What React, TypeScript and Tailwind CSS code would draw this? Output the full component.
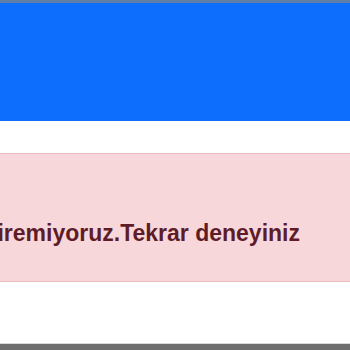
import React from 'react'

export default function App() {
  return (
    <div className="w-[350px] h-[350px] overflow-hidden bg-white flex flex-col" style={{ fontFamily: '"Liberation Sans", Arial, sans-serif' }}>
      <div className="h-[3px] bg-[#5f7fa8] shrink-0" />
      <div className="h-[118px] bg-[#0d6efd] shrink-0" />
      <div className="h-[32px] bg-white shrink-0" />
      <div className="h-[129px] shrink-0 bg-[#f8d7da] border-y border-[#ecbcc1] flex justify-end overflow-hidden pr-[50px] pt-[68px]">
        <p className="whitespace-nowrap text-[23px] leading-[22px] font-bold text-[#5e1c28]">Talebinizi şu anda yerine getiremiyoruz.Tekrar deneyiniz</p>
      </div>
      <div className="flex-1 bg-white" />
      <div className="h-px bg-[#d9d9d9] shrink-0" />
      <div className="h-[6px] bg-[#6e6e6e] shrink-0" />
    </div>
  )
}
